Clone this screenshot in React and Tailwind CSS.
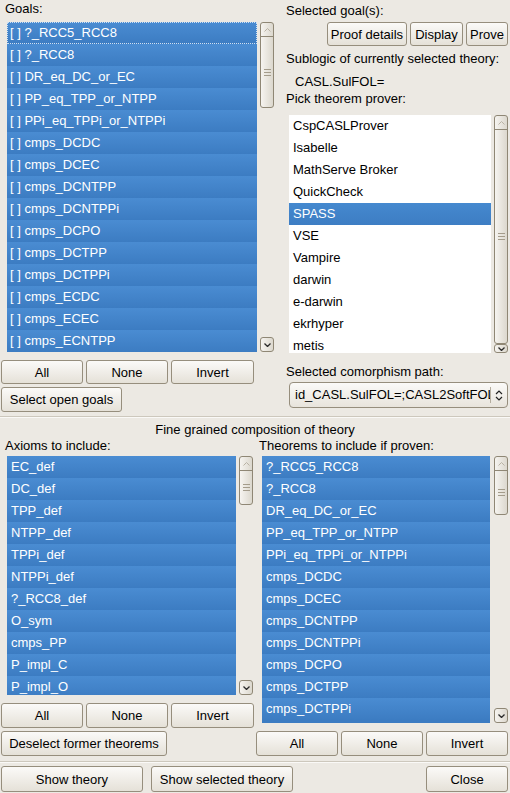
const goals = [
  '?_RCC5_RCC8', '?_RCC8', 'DR_eq_DC_or_EC', 'PP_eq_TPP_or_NTPP', 'PPi_eq_TPPi_or_NTPPi',
  'cmps_DCDC', 'cmps_DCEC', 'cmps_DCNTPP', 'cmps_DCNTPPi', 'cmps_DCPO', 'cmps_DCTPP',
  'cmps_DCTPPi', 'cmps_ECDC', 'cmps_ECEC', 'cmps_ECNTPP',
]

const provers = [
  'CspCASLProver', 'Isabelle', 'MathServe Broker', 'QuickCheck', 'SPASS', 'VSE',
  'Vampire', 'darwin', 'e-darwin', 'ekrhyper', 'metis',
]

const axioms = [
  'EC_def', 'DC_def', 'TPP_def', 'NTPP_def', 'TPPi_def', 'NTPPi_def', '?_RCC8_def',
  'O_sym', 'cmps_PP', 'P_impl_C', 'P_impl_O',
]

const theorems = [
  '?_RCC5_RCC8', '?_RCC8', 'DR_eq_DC_or_EC', 'PP_eq_TPP_or_NTPP', 'PPi_eq_TPPi_or_NTPPi',
  'cmps_DCDC', 'cmps_DCEC', 'cmps_DCNTPP', 'cmps_DCNTPPi', 'cmps_DCPO', 'cmps_DCTPP',
  'cmps_DCTPPi',
]

const Btn = ({ children, className = '' }) => (
  <button
    className={`shrink-0 rounded-[3px] border border-[#968e7d] bg-linear-to-b from-[#fbfaf8] to-[#e5e1d8] text-[13px] leading-none text-black ${className}`}
  >
    {children}
  </button>
)

const Grip = () => (
  <div className="flex flex-col gap-[2px]">
    <div className="h-px w-[7px] bg-[#a49c8b]" />
    <div className="h-px w-[7px] bg-[#a49c8b]" />
    <div className="h-px w-[7px] bg-[#a49c8b]" />
  </div>
)

const Scrollbar = ({ thumb }) => (
  <div className="flex h-full w-[14px] shrink-0 flex-col justify-between">
    <div className="flex flex-col rounded-[3px] border border-[#8f8775] bg-linear-to-r from-[#f6f4f0] to-[#dcd8ce]">
      <div className="flex h-[14px] items-center justify-center border-b border-[#8f8775]">
        <svg width="7" height="4" viewBox="0 0 7 4">
          <path d="M0.5 3.5 L3.5 0.5 L6.5 3.5" fill="none" stroke="#b9b2a4" strokeWidth="1" />
        </svg>
      </div>
      <div className={`flex items-center justify-center ${thumb}`}>
        <Grip />
      </div>
    </div>
    <div className="flex h-[15px] items-center justify-center rounded-[3px] border border-[#8f8775] bg-linear-to-r from-[#f6f4f0] to-[#dcd8ce]">
      <svg width="7" height="4" viewBox="0 0 7 4">
        <path d="M0.5 0.5 L3.5 3.5 L6.5 0.5" fill="none" stroke="#2a2a2a" strokeWidth="1.3" />
      </svg>
    </div>
  </div>
)

const SelRow = ({ children, focus, pad = 'pl-[4px]' }) => (
  <div
    className={`h-[22px] shrink-0 bg-linear-to-b from-[#4a8cd2] to-[#3c7cc2] text-white leading-[22px] whitespace-nowrap ${pad} ${focus ? 'outline outline-1 outline-dotted -outline-offset-1 outline-[#cfe0f2]' : ''}`}
  >
    {children}
  </div>
)

const App = () => {
  return (
    <div className="h-[793px] w-[510px] overflow-hidden bg-[#ece9e3] text-[13px] text-black" style={{ fontFamily: '"Liberation Sans", Arial, sans-serif' }}>
      {/* top part */}
      <div className="flex h-[416px]">
        <div className="w-[283px] shrink-0">
          <div className="ml-[5px] mt-[1px] h-[21px] leading-[16px]">Goals:</div>
          <div className="ml-[7px] flex h-[330px] gap-[3px]">
            <div className="flex w-[250px] flex-col overflow-hidden">
              {goals.map((g, i) => (
                <SelRow key={g} focus={i === 0} pad="pl-[3px]">[&nbsp;]&nbsp;{g}</SelRow>
              ))}
            </div>
            <Scrollbar thumb="h-[70px]" />
          </div>
          <div className="ml-[1px] mt-[8px] flex gap-[3px]">
            <Btn className="h-[24px] w-[82px]">All</Btn>
            <Btn className="h-[24px] w-[82px]">None</Btn>
            <Btn className="h-[24px] w-[83px]">Invert</Btn>
          </div>
          <div className="ml-[1px] mt-[3px]">
            <Btn className="h-[25px] w-[121px]">Select open goals</Btn>
          </div>
        </div>
        <div className="w-[227px] min-w-0 shrink-0">
          <div className="ml-[3px] mt-[3px] leading-[16px]">Selected goal(s):</div>
          <div className="mr-[2px] mt-[3px] flex justify-end gap-[3px]">
            <Btn className="h-[24px] w-[80px]">Proof details</Btn>
            <Btn className="h-[24px] w-[53px]">Display</Btn>
            <Btn className="h-[24px] w-[42px]">Prove</Btn>
          </div>
          <div className="ml-[3px] mt-[5px] leading-[16px]">Sublogic of currently selected theory:</div>
          <div className="ml-[12px] mt-[7px] leading-[16px]">CASL.SulFOL=</div>
          <div className="ml-[3px] mt-[1px] leading-[16px]">Pick theorem prover:</div>
          <div className="ml-[6px] mt-[8px] flex h-[238px] gap-[3px]">
            <div className="flex w-[202px] flex-col overflow-hidden bg-white">
              {provers.map((p) =>
                p === 'SPASS' ? (
                  <div key={p} className="h-[22px] shrink-0 bg-linear-to-b from-[#4589cf] to-[#3d7dc3] pl-[4px] leading-[22px] text-white">
                    {p}
                  </div>
                ) : (
                  <div key={p} className="h-[22px] shrink-0 pl-[4px] leading-[22px] text-black">
                    {p}
                  </div>
                )
              )}
            </div>
            <Scrollbar thumb="h-[213px]" />
          </div>
          <div className="ml-[3px] mt-[11px] leading-[16px]">Selected comorphism path:</div>
          <div className="ml-[6px] mr-[2px] mt-[2px] flex h-[26px] items-center overflow-hidden rounded-[4px] border border-[#968e7d] bg-linear-to-b from-[#fbfaf8] to-[#e8e4dc]">
            <div className="min-w-0 flex-1 overflow-hidden whitespace-nowrap pl-[5px]">id_CASL.SulFOL=;CASL2SoftFOL</div>
            <div className="h-[16px] w-px bg-[#b5ae9f]" />
            <div className="flex w-[16px] justify-center">
              <svg width="8" height="11" viewBox="0 0 8 11">
                <path d="M1 4 L4 1 L7 4 M1 7 L4 10 L7 7" fill="none" stroke="#222" strokeWidth="1.2" />
              </svg>
            </div>
          </div>
        </div>
      </div>

      <div className="h-px bg-[#cdc8bd]" />
      <div className="h-px bg-[#faf9f7]" />

      {/* fine grained */}
      <div className="mt-[4px] text-center leading-[16px]">Fine grained composition of theory</div>
      <div className="flex">
        <div className="w-[256px] shrink-0">
          <div className="ml-[5px] h-[18px] leading-[16px]">Axioms to include:</div>
          <div className="ml-[7px] flex h-[239px] gap-[3px]">
            <div className="flex w-[229px] flex-col overflow-hidden">
              {axioms.map((a) => (
                <SelRow key={a}>{a}</SelRow>
              ))}
            </div>
            <Scrollbar thumb="h-[33px]" />
          </div>
          <div className="ml-[1px] mt-[8px] flex gap-[3px]">
            <Btn className="h-[25px] w-[82px]">All</Btn>
            <Btn className="h-[25px] w-[82px]">None</Btn>
            <Btn className="h-[25px] w-[83px]">Invert</Btn>
          </div>
          <div className="ml-[1px] mt-[3px]">
            <Btn className="h-[25px] w-[166px]">Deselect former theorems</Btn>
          </div>
        </div>
        <div className="w-[254px] min-w-0 shrink-0">
          <div className="ml-[3px] h-[18px] leading-[16px]">Theorems to include if proven:</div>
          <div className="ml-[6px] flex h-[267px] gap-[4px]">
            <div className="flex w-[228px] flex-col overflow-hidden bg-[#3c7cc2]">
              {theorems.map((t, i) => (
                <SelRow key={t + i}>{t}</SelRow>
              ))}
            </div>
            <Scrollbar thumb="h-[43px]" />
          </div>
          <div className="mt-[8px] flex gap-[3px]">
            <Btn className="h-[25px] w-[82px]">All</Btn>
            <Btn className="h-[25px] w-[82px]">None</Btn>
            <Btn className="h-[25px] w-[82px]">Invert</Btn>
          </div>
        </div>
      </div>

      <div className="mt-[5px] h-px bg-[#cdc8bd]" />
      <div className="h-px bg-[#faf9f7]" />

      <div className="mt-[3px] flex px-[1px]">
        <Btn className="h-[26px] w-[142px]">Show theory</Btn>
        <Btn className="ml-[8px] h-[26px] w-[142px]">Show selected theory</Btn>
        <div className="flex-1" />
        <Btn className="mr-[1px] h-[26px] w-[82px]">Close</Btn>
      </div>
    </div>
  )
}

export default App
